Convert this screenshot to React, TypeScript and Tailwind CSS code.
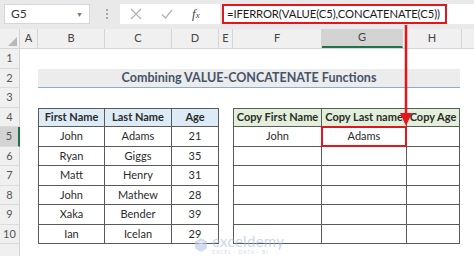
import { ReactNode } from 'react';

type Row = {
	n: number;
	h: string;
	left?: [string, string, string];
	right?: [string, string, string];
	head?: boolean;
	title?: boolean;
};

const rows: Row[] = [
	{ n: 1, h: 'h-[20px]' },
	{ n: 2, h: 'h-[19px]', title: true },
	{ n: 3, h: 'h-[20px]' },
	{ n: 4, h: 'h-[19px]', head: true, left: ['First Name', 'Last Name', 'Age'], right: ['Copy First Name', 'Copy Last name', 'Copy Age'] },
	{ n: 5, h: 'h-[20px]', left: ['John', 'Adams', '21'], right: ['John', 'Adams', ''] },
	{ n: 6, h: 'h-[19px]', left: ['Ryan', 'Giggs', '35'], right: ['', '', ''] },
	{ n: 7, h: 'h-[20px]', left: ['Matt', 'Henry', '31'], right: ['', '', ''] },
	{ n: 8, h: 'h-[19px]', left: ['John', 'Mathew', '28'], right: ['', '', ''] },
	{ n: 9, h: 'h-[20px]', left: ['Xaka', 'Bender', '39'], right: ['', '', ''] },
	{ n: 10, h: 'h-[19px]', left: ['Ian', 'Icelan', '29'], right: ['', '', ''] },
];

const Cell = ({
	w,
	first,
	top,
	bg,
	bold,
	children,
}: {
	w: string;
	first?: boolean;
	top?: boolean;
	bg?: string;
	bold?: boolean;
	children?: ReactNode;
}) => (
	<div
		className={`${w} relative flex items-center justify-center border-r border-b border-[#5a5a5a] text-[11px] text-[#2b2b2b] whitespace-nowrap ${
			first ? 'border-l' : ''
		} ${top ? 'border-t' : ''} ${bg ?? 'bg-white'} ${bold ? 'font-bold text-[#1c1c1c]' : ''}`}
	>
		{children}
	</div>
);

const App = () => {
	return (
		<div className="relative w-[474px] h-[256px] overflow-hidden bg-white font-['Lato','Liberation_Sans',sans-serif]">
			{/* formula bar */}
			<div className="flex items-center h-[29px] bg-[#e9e9e9] pt-[4px] pb-[5px]">
				<div className="flex items-center justify-between w-[86px] h-[20px] ml-[4px] px-[6px] bg-white border border-[#d6d6d6] text-[12px] text-[#333]">
					<span>G5</span>
					<span className="text-[7px] text-[#777]">▼</span>
				</div>
				<div className="flex flex-col gap-[2px] ml-[16px]">
					<span className="w-[2px] h-[2px] bg-[#a8a8a8]" />
					<span className="w-[2px] h-[2px] bg-[#a8a8a8]" />
					<span className="w-[2px] h-[2px] bg-[#a8a8a8]" />
				</div>
				<div className="flex items-center w-[100px] h-[20px] ml-[12px] bg-white">
					<svg width="12" height="12" viewBox="0 0 12 12" className="ml-[10px]">
						<path d="M1 1 L11 11 M11 1 L1 11" stroke="#b0b0b0" strokeWidth="1.2" />
					</svg>
					<svg width="12" height="12" viewBox="0 0 12 12" className="ml-[19px]">
						<path d="M1 6.5 L4.5 10 L11 2" stroke="#b0b0b0" strokeWidth="1.2" fill="none" />
					</svg>
					<span className="ml-[19px] font-['Liberation_Serif',serif] italic text-[13px] text-[#444]">
						f<span className="text-[9px]">x</span>
					</span>
				</div>
				<div className="flex-1 h-[20px] ml-[2px] bg-white">
					<div className="flex items-center w-[225px] h-[20px] border-2 border-[#e3161d] pl-[3px] text-[11.25px] text-[#1a1a1a] tracking-[-0.1px] whitespace-nowrap overflow-hidden">
						=IFERROR(VALUE(C5),CONCATENATE(C5))
					</div>
				</div>
			</div>

			{/* column headers */}
			<div className="flex h-[20px] bg-[#f0f0f0] border-b border-[#d4d4d4] text-[11px] text-[#444]">
				<div className="relative w-[20px] border-r border-[#d4d4d4]">
					<div className="absolute right-[2px] bottom-[2px] w-0 h-0 border-l-[9px] border-l-transparent border-b-[9px] border-b-[#b8b8b8]" />
				</div>
				<div className="w-[18px] flex items-center justify-center border-r border-[#d4d4d4]">A</div>
				<div className="w-[67px] flex items-center justify-center border-r border-[#d4d4d4]">B</div>
				<div className="w-[67px] flex items-center justify-center border-r border-[#d4d4d4]">C</div>
				<div className="w-[47px] flex items-center justify-center border-r border-[#d4d4d4]">D</div>
				<div className="w-[14px] flex items-center justify-center border-r border-[#d4d4d4]">E</div>
				<div className="w-[89px] flex items-center justify-center border-r border-[#d4d4d4]">F</div>
				<div className="w-[81px] flex items-center justify-center bg-[#d3d3d3] border-b-2 border-[#217346] border-r border-r-[#d4d4d4]">G</div>
				<div className="w-[59px] flex items-center justify-center border-r border-[#d4d4d4]">H</div>
				<div className="flex-1" />
			</div>

			{/* sheet rows */}
			{rows.map((r) => (
				<div key={r.n} className={`flex ${r.h}`}>
					<div
						className={`w-[20px] flex items-center justify-center text-[11px] text-[#555] border-b border-[#dcdcdc] ${
							r.n === 5 ? 'bg-[#d3d3d3] border-r-2 border-r-[#217346]' : 'bg-[#f0f0f0] border-r border-r-[#d4d4d4]'
						}`}
					>
						{r.n}
					</div>
					<div className="w-[18px]" />
					{r.title && (
						<div className="w-[422px] flex items-center justify-center bg-[#ececec] border-b-[1.5px] border-[#8eaadb] text-[12.5px] font-bold text-[#44546a]">
							Combining VALUE-CONCATENATE Functions
						</div>
					)}
					{r.left && (
						<>
							<Cell w="w-[67px]" first top={r.head} bg={r.head ? 'bg-[#ddebf7]' : undefined} bold={r.head}>
								{r.left[0]}
							</Cell>
							<Cell w="w-[67px]" top={r.head} bg={r.head ? 'bg-[#ddebf7]' : undefined} bold={r.head}>
								{r.left[1]}
							</Cell>
							<Cell w="w-[47px]" top={r.head} bg={r.head ? 'bg-[#ddebf7]' : undefined} bold={r.head}>
								{r.left[2]}
							</Cell>
							<div className="w-[14px]" />
						</>
					)}
					{r.right && (
						<>
							<Cell w="w-[89px]" first top={r.head} bg={r.head ? 'bg-[#e2efda]' : undefined} bold={r.head}>
								{r.right[0]}
							</Cell>
							<Cell w="w-[85px]" top={r.head} bg={r.head ? 'bg-[#e2efda]' : undefined} bold={r.head}>
								{r.right[1]}
								{r.n === 5 && <div className="absolute -top-px -left-px -right-px -bottom-px border-2 border-[#e3161d]" />}
							</Cell>
							<Cell w="w-[53px]" top={r.head} bg={r.head ? 'bg-[#e2efda]' : undefined} bold={r.head}>
								{r.right[2]}
							</Cell>
						</>
					)}
				</div>
			))}
			<div className="flex h-[12px]">
				<div className="w-[20px] bg-[#f0f0f0] border-r border-[#d4d4d4]" />
			</div>

			{/* red arrow from formula to G5 */}
			<svg className="absolute left-0 top-0 pointer-events-none" width="474" height="256">
				<line x1="406" y1="25" x2="406" y2="116" stroke="#e3161d" strokeWidth="2.5" />
				<polygon points="400,113 412,113 406,126" fill="#e3161d" />
			</svg>

			{/* watermark */}
			<div className="absolute left-[193px] top-[234px] flex items-center gap-[3px] opacity-60 pointer-events-none">
				<svg width="16" height="16" viewBox="0 0 16 16">
					<path d="M8 1 L14 4.5 L14 11.5 L8 15 L2 11.5 L2 4.5 Z" fill="#b5c7e6" />
					<path d="M8 4 L11.5 6 L8 8 L4.5 6 Z" fill="#e8eef8" />
				</svg>
				<div className="flex flex-col leading-none">
					<span className="text-[15px] leading-[15px] text-[#a9bde0] tracking-[0.3px]">exceldemy</span>
					<span className="mt-[1px] text-[5px] leading-[5px] text-[#b5c4de] tracking-[1px]">EXCEL · DATA · BI</span>
				</div>
			</div>
		</div>
	);
};

export default App;
